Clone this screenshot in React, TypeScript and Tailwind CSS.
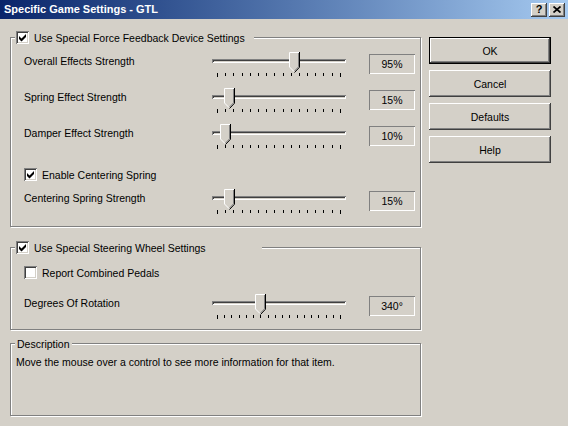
import React from "react";

function CheckBox({ checked }: { checked: boolean }) {
  return (
    <div className="w-[13px] h-[13px] shrink-0 bg-white shadow-[inset_1px_1px_0_#808080,inset_-1px_-1px_0_#ffffff,inset_2px_2px_0_#404040,inset_-2px_-2px_0_#d4d0c8]">
      {checked && (
        <svg width="13" height="13" viewBox="0 0 13 13" className="block">
          <path d="M3 5 L5.5 7.5 L10 3 L10 6 L5.5 10.5 L3 8 Z" fill="#000" />
        </svg>
      )}
    </div>
  );
}

function Thumb({ left }: { left: number }) {
  return (
    <svg
      className="absolute top-0"
      style={{ left }}
      width="11"
      height="21"
      viewBox="0 0 11 21"
    >
      <path d="M0 0 H11 V15 L5.5 20.5 L0 15 Z" fill="#d4d0c8" />
      <path d="M5 19.5 L0.5 15 V0.5 H10" stroke="#ffffff" strokeWidth="1" fill="none" />
      <path d="M10.5 0 V15.2 L5.5 20.5" stroke="#000000" strokeWidth="1" fill="none" />
      <path d="M9.5 1 V14.8 L5.5 19" stroke="#808080" strokeWidth="1" fill="none" />
    </svg>
  );
}

function Slider({ frac, ticks }: { frac: number; ticks: number }) {
  const left = Math.round(frac * 122);
  return (
    <div className="relative w-[134px] h-[25px] pt-[7px] shrink-0">
      <div className="h-[4px] shadow-[inset_1px_1px_0_#808080,inset_-1px_-1px_0_#ffffff,inset_2px_2px_0_#404040,inset_-2px_-2px_0_#d4d0c8]" />
      <div className="mt-[10px] flex justify-between items-start px-[5px]">
        {Array.from({ length: ticks }).map((_, i) => (
          <div
            key={i}
            className={i === 0 || i === ticks - 1 ? "w-[1px] h-[4px] bg-black" : "w-[1px] h-[3px] bg-black"}
          />
        ))}
      </div>
      <Thumb left={left} />
    </div>
  );
}

function ValueBox({ v }: { v: string }) {
  return (
    <div className="ml-[23px] mt-[2px] w-[46px] h-[20px] shrink-0 shadow-[inset_1px_1px_0_#808080,inset_-1px_-1px_0_#ffffff] flex items-center justify-center">
      {v}
    </div>
  );
}

function Row({
  label,
  frac,
  ticks,
  value,
  className,
}: {
  label: string;
  frac: number;
  ticks: number;
  value: string;
  className: string;
}) {
  return (
    <div className={className}>
      <div className="w-[188px] mt-[3px] shrink-0">{label}</div>
      <Slider frac={frac} ticks={ticks} />
      <ValueBox v={value} />
    </div>
  );
}

function Btn({ label, def }: { label: string; def?: boolean }) {
  return (
    <div
      className={
        def
          ? "h-[27px] w-[122px] border border-black shadow-[inset_-1px_-1px_0_#404040,inset_1px_1px_0_#ffffff,inset_-2px_-2px_0_#808080] flex items-center justify-center"
          : "h-[27px] w-[122px] shadow-[inset_-1px_-1px_0_#404040,inset_1px_1px_0_#ffffff,inset_-2px_-2px_0_#808080] flex items-center justify-center"
      }
    >
      {label}
    </div>
  );
}

function TitleBtn({ children }: { children: React.ReactNode }) {
  return (
    <div className="w-[16px] h-[14px] bg-[#d4d0c8] shadow-[inset_-1px_-1px_0_#404040,inset_1px_1px_0_#ffffff,inset_-2px_-2px_0_#808080] flex items-center justify-center">
      {children}
    </div>
  );
}

export default function App() {
  return (
    <div className="w-[568px] h-[426px] bg-[#d4d0c8] overflow-hidden font-['Liberation_Sans',Arial,sans-serif] text-[10.5px] leading-[12px] text-black">
      {/* Title bar */}
      <div className="h-[19px] flex items-center bg-linear-to-r from-[#0a246a] to-[#a6caf0] pl-[4px] pr-[3px]">
        <div className="flex-1 text-white font-bold text-[11px] leading-[13px]">
          Specific Game Settings - GTL
        </div>
        <div className="flex gap-[2px]">
          <TitleBtn>
            <span className="font-bold text-[11px] leading-[11px] text-black">?</span>
          </TitleBtn>
          <TitleBtn>
            <svg width="8" height="7" viewBox="0 0 8 7">
              <path d="M0.5 0.5 L7.5 6.5 M7.5 0.5 L0.5 6.5" stroke="#000" strokeWidth="1.7" />
            </svg>
          </TitleBtn>
        </div>
      </div>

      <div className="flex pt-[18px] pl-[10px]">
        <div className="flex flex-col w-[411px] shrink-0">
          {/* Group 1 */}
          <div className="relative h-[190px] border border-[#808080] shadow-[inset_1px_1px_0_#ffffff,1px_1px_0_#ffffff]">
            <div className="absolute left-[4px] top-[-7px] h-[13px] w-[239px] bg-[#d4d0c8] pl-[1px] flex items-center gap-[5px]">
              <CheckBox checked />
              <span>Use Special Force Feedback Device Settings</span>
            </div>
            <Row className="flex items-start pl-[13px] mt-[14px]" label="Overall Effects Strength" frac={95 / 150} ticks={16} value="95%" />
            <Row className="flex items-start pl-[13px] mt-[11px]" label="Spring Effect Strength" frac={15 / 150} ticks={16} value="15%" />
            <Row className="flex items-start pl-[13px] mt-[11px]" label="Damper Effect Strength" frac={10 / 150} ticks={16} value="10%" />
            <div className="mt-[19px] pl-[13px] h-[13px] flex items-center gap-[5px]">
              <CheckBox checked />
              <span>Enable Centering Spring</span>
            </div>
            <Row className="flex items-start pl-[13px] mt-[8px]" label="Centering Spring Strength" frac={15 / 150} ticks={16} value="15%" />
          </div>

          {/* Group 2 */}
          <div className="relative mt-[20px] h-[83px] border border-[#808080] shadow-[inset_1px_1px_0_#ffffff,1px_1px_0_#ffffff]">
            <div className="absolute left-[4px] top-[-7px] h-[13px] w-[247px] bg-[#d4d0c8] pl-[1px] flex items-center gap-[5px]">
              <CheckBox checked />
              <span>Use Special Steering Wheel Settings</span>
            </div>
            <div className="mt-[18px] pl-[13px] h-[13px] flex items-center gap-[5px]">
              <CheckBox checked={false} />
              <span>Report Combined Pedals</span>
            </div>
            <Row className="flex items-start pl-[13px] mt-[15px]" label="Degrees Of Rotation" frac={0.355} ticks={18} value="340°" />
          </div>

          {/* Description */}
          <div className="relative mt-[13px] h-[73px] border border-[#808080] shadow-[inset_1px_1px_0_#ffffff,1px_1px_0_#ffffff]">
            <div className="absolute left-[4px] top-[-7px] h-[13px] bg-[#d4d0c8] px-[2px] flex items-center">
              Description
            </div>
            <div className="pl-[5px] pt-[12px]">
              Move the mouse over a control to see more information for that item.
            </div>
          </div>
        </div>

        <div className="ml-[8px] flex flex-col gap-[6px] w-[122px] shrink-0">
          <Btn label="OK" def />
          <Btn label="Cancel" />
          <Btn label="Defaults" />
          <Btn label="Help" />
        </div>
      </div>
    </div>
  );
}
